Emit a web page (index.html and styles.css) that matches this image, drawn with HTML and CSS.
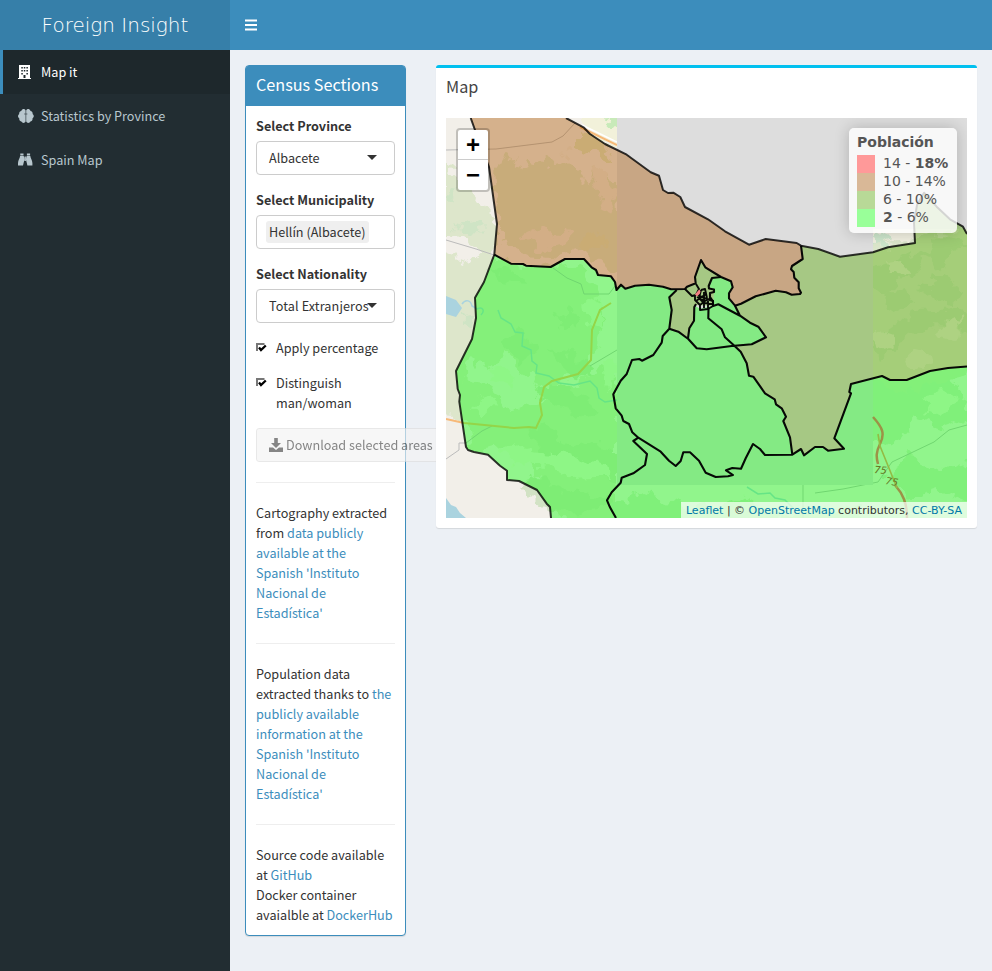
FILE: index.html
```html
<!DOCTYPE html>
<html lang="en">
<head>
<meta charset="utf-8">
<title>Foreign Insight</title>
<link rel="stylesheet" href="styles.css">
</head>
<body>
<header class="topbar">
  <div class="logo">Foreign Insight</div>
  <nav class="navbar"><svg class="bars" viewBox="0 0 12 12"><path d="M0 1.5h12M0 6h12M0 10.5h12" stroke="#fff" stroke-width="2"/></svg></nav>
</header>
<div class="layout">
  <aside class="sidebar">
    <a class="item active"><svg class="ico" viewBox="0 0 16 14"><path fill-rule="evenodd" d="M1 0h11v13h1v1H0v-1h1zM3.300 2v1.600h1.500V2zm2.500 0v1.600h1.500V2zm2.600 0v1.600h1.500V2zM3.300 5v1.600h1.500V5zm2.500 0v1.600h1.500V5zm2.600 0v1.600h1.500V5zM3.300 8v1.500h1.500V8zm5.100 0v1.500h1.500V8zM5.500 10v3h2v-3z"/></svg>Map it</a>
    <a class="item"><svg class="ico" viewBox="0 0 16 14"><path d="M7.600 1.600v11C6.800 14.300 4.400 14.300 3.700 12.700 1.900 12.600.9 11 1.400 9.600-.4 8.300-.4 5.900 1.200 4.900.9 3.300 2 2 3.300 1.900 4.200-.4 7-.5 7.600 1.600zM8.200 1.600v11c.8 1.700 3.200 1.700 3.900.1 1.800-.1 2.800-1.700 2.300-3.100 1.800-1.300 1.800-3.700.2-4.700.3-1.600-.8-2.900-2.100-3C11.600-.4 8.800-.5 8.200 1.600z"/><path d="M7.700 5H6.300M8.200 5h1.100" stroke="#222d32" stroke-width=".7"/></svg>Statistics by Province</a>
    <a class="item"><svg class="ico" viewBox="0 0 16 14"><path d="M2.300.5h3.200v2H2.300zM8.900.5h3.200v2H8.900zM2.100 3.100h3.600c.5 1.200.7 2.400.7 3.700L5 12.500H0V10C.2 7.200 1.800 5.500 2.100 3.100zM12.300 3.100H8.700C8.200 4.300 8 5.500 8 6.800l1.400 5.700h5V10c-.2-2.800-1.800-4.500-2.100-6.900zM6.500 3.500h1.400V8H6.500z"/></svg>Spain Map</a>
  </aside>
  <main class="content">
    <section class="panel">
      <h3 class="panel-head">Census Sections</h3>
      <div class="panel-body">
        <div class="group"><label>Select Province</label><div class="select">Albacete<i class="caret"></i></div></div>
        <div class="group"><label>Select Municipality</label><div class="select multi"><span class="tag">Hellín (Albacete)</span></div></div>
        <div class="group"><label>Select Nationality</label><div class="select total">Total Extranjeros<i class="caret"></i></div></div>
        <div class="check"><svg class="box" viewBox="0 0 11 10"><path d="M1 8V1H8.500" fill="none" stroke="#777" stroke-width="2"/><path d="M3 4.500L5 7 9.800 2.500" fill="none" stroke="#000" stroke-width="2.300"/></svg><span>Apply percentage</span></div>
        <div class="check"><svg class="box" viewBox="0 0 11 10"><path d="M1 8V1H8.500" fill="none" stroke="#777" stroke-width="2"/><path d="M3 4.500L5 7 9.800 2.500" fill="none" stroke="#000" stroke-width="2.300"/></svg><span>Distinguish man/woman</span></div>
        <button class="download" disabled><svg viewBox="0 0 14 14"><path d="M5.200 0h3.600v5H12L7 10 2 5h3.200zM0 9.500h4L7 12l3-2.500h4V14H0z"/></svg><span>Download selected areas</span></button>
        <hr>
        <p>Cartography extracted<br>from <a>data publicly<br>available at the<br>Spanish 'Instituto<br>Nacional de<br>Estadística'</a></p>
        <hr>
        <p>Population data<br>extracted thanks to <a>the<br>publicly available<br>information at the<br>Spanish 'Instituto<br>Nacional de<br>Estadística'</a></p>
        <hr>
        <p>Source code available<br>at <a>GitHub</a><br>Docker container<br>avaialble at <a>DockerHub</a></p>
      </div>
    </section>
    <section class="mapbox">
      <h3 class="map-title">Map</h3>
      <div class="map">
        <svg class="canvas" viewBox="446 118 521 400">
          <defs>
            <filter id="rough" x="-5%" y="-5%" width="110%" height="110%" color-interpolation-filters="sRGB"><feTurbulence type="fractalNoise" baseFrequency=".07" numOctaves="3" seed="4"/><feDisplacementMap in="SourceGraphic" scale="22" xChannelSelector="R" yChannelSelector="G"/></filter>
            <clipPath id="tiles"><path d="M446 118H617V518H446zM617 485H873V229H967V518H617z"/></clipPath>
          </defs>
          <path fill="#ddd" d="M446 118h521v400H446z"/>
          <g clip-path="url(#tiles)">
            <path fill="#f2efe9" d="M446 118h521v400H446z"/>
            <g filter="url(#rough)">
              <path fill="#dde6cb" d="M440 160L462 180 494 220 498 270 478 330 462 385 470 420 440 418V250L470 262 480 250 440 232z"/>
              <path fill="#cfe4c5" d="M456 226l18-5 15 3-8 8-22 1zM446 192l10-4-6 12zM462 318l15-2v16l-16-3z"/>
              <path fill="#dde6cb" d="M492 165l20-8 12 18 7-15 20 3 18-4 12 12 8 18 6-20 18 10 6 20 4 36-2 50-10-10-22-25-30 8-30-3-25-12-8-40z"/>
              <path fill="#eee9df" d="M522 235l20-10 15 10 12-4-8 16-20 4zM561 152l10-5 2 8zM596 165l12 10 8 30-8 10-15-30z"/>
              <path fill="#dfe6c2" d="M578 132l20 4 14 25-20-10-14-4zM580 235l20-5 5 16-22 6z"/>
              <path fill="#f2f1da" d="M580 112h37v36l-25-12z"/><path fill="#c8eab9" d="M603 114h20v20l-10-9z"/>
              <path fill="#dde6cb" d="M494 260l40 8 32-6 20 8 20 40-10 35-16 25-28 20-22-10-20-24-24 15-20-20 12-60z"/>
              <path fill="#dde6cb" d="M462 380l28 2 20 30 40-10 50-35 17 6v150l-55-2-30-58-30-16-28 4-10-44z"/>
              <path fill="#d2e2c4" d="M485 268l26 3 15 13-25-2zM555 315l16-5 8 14-20 4zM500 340l20-10 15 20-16 10zM549 345l25 10 20 17-20 8-18-14zM545 385l30 5 25 20-20 8-40-18zM530 430l18-8 10 20 20 5 20-5 19 10v30l-40-8-30-10z"/>
              <path fill="#d2e2c4" d="M517 482l20-6 30 15 40 5 10 10-50 6-30-10z"/>
              <path fill="#edf1e0" d="M488 370l15-5 12 15-6 9zM472 405l14-12 10 12-14 13zM499 450l20-8 10 8 25 2 12 10-25 5-28-2zM602 364l12-6 3 20-12 8zM586 305l16-8v28l-12 6zM540 460l30-8 20 12 14-2 4 16-34 2z"/>
              <path fill="#f0efe0" d="M865 220h60v25l-57 10z"/><path fill="#cce5cb" d="M872 236l15-3 6 8-20 6z"/>
              <path fill="#dbe6ca" d="M865 248l110-22v148l-110 25z"/>
              <path fill="#cbe2bf" d="M874 268l20-5 12-12 10 7 24-24 20 2 12 14-22 5-10 15-12-15-14 26-10-6-15 20-14-10zM885 295l20-6 9 14-24 8zM920 290l18-12 25 12-10 16-18-8zM873 340l40-30 50-2 8 20-38-2-26 12-25 20z"/>
              <path fill="#e9edd9" d="M875 330l18 6-4 13-14-10zM903 360l10-12 16 4 3 12-14 4zM935 335l26-20-8 25zM888 262l16-2 4 14-16 4z"/>
              <path fill="#d6e6cb" d="M865 382l38 8 50-12 20 40-30 10-30-12-20 30-28-6zM887 475l25-20 30 15 30-10v45l-35-16-30 10zM610 505l37-12 45 16 50-9 40 15 80-10v24H610z"/>
              <path fill="#edf1e0" d="M928 392l15-2 18 11-17 14-20-4z"/>
            </g>
            <path fill="#aad3df" d="M446 296l10 4 6 8-6 9-10-3zM446 498l5 7 5 2 4 6 6 5h-20z"/>
            <path fill="none" stroke="#aad3df" stroke-width="1.500" d="M462 304c4-6 9-3 10 2l5 3c6-3 8 2 4 6m17-5l3 8 10 6 4 8 8 1-1 13 9 4 1 11 5 4-1 8 13 3 10 7 15 2 16-4 7 7 2 10 6 4 12-2M747 487l11 7 12-1 5 5 10 2 9 9"/>
            <path fill="none" stroke="#bbb" d="M446 150l50-1 56-7 11-6 12-13M446 240l30 9 18 6M553 268l14 10 14 6 3 10h25l6-8M590 366l27-16M446 459l13-9v-7h7l16-12 10-5M967 425l-18 5-15 12-42 20-14 20-35 7-28 4M803 485v33"/>
            <path fill="none" stroke="#f7b978" stroke-width="2" d="M446 419l18 4 50 5 15-1 7 1 6-13-2-12 4-16 8-6 26-7 13-14 1-30 8-20 11-7M580 127l37 18"/>
            <path fill="none" stroke="#fff" stroke-width="1.500" d="M582 125l35 17"/>
          </g>
          <g fill-opacity=".4">
            <path fill="#a50" d="M470.700 118L475 130 489 167 497 224 494.300 254.700 511 263.700 523 264 526 265.700 550.700 267 565 259H584L592 267.700 596 270 598 275 611 276.300 615 282 616.500 290 621 284.700 625.300 288.700 635 285.700 649 284.700 663 286.700 671 289.300 685 289 687 286.700 695.700 283.300 695 277 701 260 705.300 267.300 721 277 731 281.300 732.700 287.300 729 293.300V298.300L735 305.700 741 303.700 755.700 296.300 775.700 290.700 786 292.300 791.700 294.700 800 294 801 292.700 798.700 288.300V282.300L794.300 277.700 793.700 272 791 269.300 792 266 802.700 259 801 245.700 796.700 243 765.700 239 749 244.700 725 231.300 708 219.300 685 207 680.300 197 673.300 192.700H668L663 190 659 175.700 650.700 172.300 626.700 154.700 605 144 590 134 584 127.700 566 118z"/>
            <path fill="#0f0" d="M494.300 254.700L511 263.700 523 264 526 265.700 550.700 267 565 259H584L592 267.700 596 270 598 275 611 276.300 615 282 616.500 290 621 284.700 625.300 288.700 635 285.700 649 284.700 663 286.700 676.700 290 669.300 297.300 671.700 310 669.300 328.700 662.700 336 661.700 342.700 653.300 355 642 360.700 639.300 359 632 360 626.700 374 620.700 380.700 613.300 394.300 615.700 408.300 621.700 415.700 623.300 421 629 424 632.300 432.300 638.300 437.700 633.300 441 647 454 645 465 633.300 473.300 621.700 477.700 620.700 482.700 611.700 492.300 607 500.300 610 507.300 616 518H551L550 507 546.700 503.700 537 490 519 481 507 480V470.700L500 465.700 488 454.700 468 450 466 447 459.300 401.700 460 395 457.700 389 456 371 472 339 476 318 475 297.700 484 282z"/>
            <path fill="#0f0" d="M669.300 329L678.300 331.700 688.300 339 696.700 348 706.700 349 733.300 344.700 740.700 351.700 746.700 363.300 749 375.700 753.300 376.700 765 393.300 774.700 399.300 776 404.300 781.700 408.300 786 416.700 783.300 421 790 437.300 792.300 454.300 765 455 760 449 753 444 745.700 458.300 741 468.700 732.300 468 726 470.300 733 475 728 476.300 715.700 477 705.700 472.700 699 460.700 690 452.300H683.300L680.700 461 675.700 466 669 460.700 660.700 451.700 638.300 437.700 632.300 432.300 629 424 623.300 421 621.700 415.700 615.700 408.300 613.300 394.300 620.700 380.700 626.700 374 632 360 639.300 359 642 360.700 653.300 355 661.700 342.700 662.700 336z"/>
            <path fill="#0f0" d="M638.300 437.700L633.300 441 647 454 645 465 633.300 473.300 621.700 477.700 620.700 482.700 611.700 492.300 607 500.300 610 507.300 616 518H967V366.500L948 368 930 371 906.700 380H890L882 376 851 384 849.300 392 851 393.300 834.300 438.300 844 448.700 828 450.700 823 447H815L804 455.300 801 449 792.300 455H765L760 449 753 444 745.700 458.300 741 468.700 732.300 468 726 470.300 733 475 728 476.300 715.700 477 705.700 472.700 699 460.700 690 452.300H683.300L680.700 461 675.700 466 669 460.700 660.700 451.700z"/>
            <path fill="#5a0" d="M801 245.700L818.300 249 840 256.700 873 252.300 888 247.300 915 243 914 223 917 205 924 192.700 936.700 206.700 950 219.300 963 226.700 967 234V366.500L948 368 930 371 906.700 380H890L882 376 851 384 849.300 392 851 393.300 834.300 438.300 844 448.700 828 450.700 823 447H815L804 455.300 801 449 792.300 454.300 790 437.300 783.300 421 786 416.700 781.700 408.300 776 404.300 774.700 399.300 765 393.300 753.300 376.700 749 375.700 746.700 363.300 740.700 351.700 733.300 344.700 751.700 344.300 766 337.300 758.300 326.700 750 322.700 740 315.700 735 305.700 741 303.700 755.700 296.300 775.700 290.700 786 292.300 791.700 294.700 800 294 801 292.700 798.700 288.300V282.300L794.300 277.700 793.700 272 791 269.300 792 266 802.700 259z"/>
            <path fill="#5a0" d="M676.700 290H685L687 286.700 695.700 283.300 695 277 701 260 705.300 267.300 721 277 712 278 708.700 286 714.300 290 713 306 694.300 305 694 320.700 689.300 328.300 688 338.300 678 331 669.300 328.700 671.700 310 669.300 297.300z"/>
            <path fill="#0f0" d="M721 277L731 281.300 732.700 287.300 729 293.300V298.300L740 315.700 718.300 304.300 713 306 714.300 290 708.700 286 712 278z"/>
            <path fill="#0f0" d="M694.300 305L700 309 718.300 304.300 740 315.700 750 322.700 758.300 326.700 766 337.300 751.700 344.300 733.300 345 706.700 349.300 696.700 348.300 688 338.300 689.300 328.300 694 320.700z"/>
          </g>
          <g fill="none" stroke-linejoin="round">
            <path stroke="#9c9247" stroke-width="2.500" d="M873 417c10 11 12 17 7 27-4 8-4 13-2 20M895 485c8 9 12 18 12 33"/>
            <path stroke="#93bb44" stroke-width="1.600" d="M878 434l2 12 17 42"/>
          </g>
          <g fill="none" stroke="#000" stroke-width="2" stroke-linejoin="round" stroke-opacity=".8">
            <path d="M470.700 118L475 130 489 167 497 224 494.300 254.700 484 282 475 297.700 476 318 472 339 456 371 457.700 389 460 395 459.300 401.700 466 447 468 450 474 452 488 454.700 500 465.700 507 470.700V480L519 481 537 490 546.700 503.700 550 507 551 518"/>
            <path d="M566 118L584 127.700 590 134 605 144 626.700 154.700 650.700 172.300 659 175.700 663 190 668 193 673.300 192.700 680.300 197 685 207 708 219.300 725 231.300 749 244.700 765.700 239 796.700 243 801 245.700 818.300 249 840 256.700 873 252.300 888 247.300 915 243 914 223 917 205 924 192.700 936.700 206.700 950 219.300 963 226.700 967 234"/>
          </g>
          <g fill="none" stroke="#000" stroke-width="2.100" stroke-linejoin="round" stroke-opacity=".96">
            <path d="M494.300 254.700L511 263.700 523 264 526 265.700 550.700 267 565 259H584L592 267.700 596 270 598 275 611 276.300 615 282 616.500 290 621 284.700 625.300 288.700 635 285.700 649 284.700 663 286.700 671 289.300 685 289 687 286.700 695.700 283.300 695 277 701 260 705.300 267.300 721 277 731 281.300 732.700 287.300 729 293.300V298.300L735 305.700 741 303.700 755.700 296.300 775.700 290.700 786 292.300 791.700 294.700 800 294 801 292.700 798.700 288.300V282.300L794.300 277.700 793.700 272 791 269.300 792 266 802.700 259 801 245.700"/>
            <path d="M676.700 290L669.300 297.300 671.700 310 669.300 328.700 662.700 336 661.700 342.700 653.300 355 642 360.700 639.300 359 632 360 626.700 374 620.700 380.700 613.300 394.300 615.700 408.300 621.700 415.700 623.300 421 629 424 632.300 432.300 638.300 437.700 660.700 451.700 669 460.700 675.700 466 680.700 461 683.300 452.300H690L699 460.700 705.700 472.700 715.700 477 728 476.300 733 475 726 470.300 732.300 468 741 468.700 745.700 458.300 753 444 760 449 765 455 792.300 454.700 801 449 804 455.300 815 447H823L828 450.700 844 448.700 834.300 438.300 851 393.300 849.300 392 851 384 882 376 890 380H906.700L930 371 948 368 967 366.500"/>
            <path d="M638.300 437.700L633.300 441 647 454 645 465 633.300 473.300 621.700 477.700 620.700 482.700 611.700 492.300 607 500.300 610 507.300 616 518M669.300 328.700L678.300 331.700 688.300 339 696.700 348.300 706.700 349.300 731.700 346 751.700 344.300 766 337.300 758.300 326.700 750 322.700 740 315.700 718.300 304.300 713 306M735 305.700L740 315.700M688 338.300L689.300 328.300 694 320.700 694.300 307 696 304M708.500 309L708.300 318.300 721.700 329.300 725 337.300 733.300 344.700 740.700 351.700 746.700 363.300 749 375.700 753.300 376.700 765 393.300 774.700 399.300 776 404.300 781.700 408.300 786 416.700 783.300 421 790 437.300 792.300 454.300M721 277L712 278 708.700 286 709 288.500 714 289.500V292L710 293V298L713 301 713 306"/>
            <path stroke-width="1.900" d="M685 289l7 7 4-1 3-6-3-5M695 295v5l5 5v5l8-1 5-3v-5l-9-3-8-4M701 290l4-1 2 9M701 290l-2 8 5 5 9 1M696 301l7-5 4-2M704 292v16M697 297l8 4 7-3M700 305l5-4M708 301v8"/>
          </g>
          <path fill="#f47f84" d="M695 294.500l4-5 1.500 1.500-.5 2.500-3 3z"/>
          <g class="contour"><text x="874" y="473" transform="rotate(5 874 473)">75</text><text x="885" y="484" transform="rotate(10 885 484)">75</text></g>
        </svg>
        <div class="zoom"><span>+</span><span>−</span></div>
        <div class="legend"><b class="lt">Población</b>
          <div class="row"><i class="sw red"></i><span>14 - <b>18%</b></span></div>
          <div class="row"><i class="sw brown"></i><span>10 - 14%</span></div>
          <div class="row"><i class="sw olive"></i><span>6 - 10%</span></div>
          <div class="row"><i class="sw green"></i><span><b>2</b> - 6%</span></div>
        </div>
        <div class="attrib"><a>Leaflet</a> | © <a>OpenStreetMap</a> contributors, <a>CC-BY-SA</a></div>
      </div>
    </section>
  </main>
</div>
</body>
</html>
```
FILE: styles.css
```css
* { box-sizing: border-box; }
body { margin: 0; font: 12.650px/20px "Source Sans Pro", "Noto Sans CJK JP", sans-serif; color: #333; background: #ecf0f5; }
a { color: #3c8dbc; text-decoration: none; }
.topbar { display: flex; height: 50px; background: #3c8dbc; }
.logo { width: 230px; background: #367fa9; color: #fff; text-align: center; font: 200 20px/50px "DejaVu Sans", sans-serif; }
.navbar { padding: 19px 15px; }
.bars { display: block; width: 12px; height: 12px; }
.layout { display: flex; height: 921px; }
.sidebar { width: 230px; background: #222d32; }
.item { display: flex; align-items: center; height: 44px; padding-left: 15px; border-left: 3px solid transparent; color: #b8c7ce; }
.item.active { background: #1e282c; border-left-color: #3c8dbc; color: #fff; }
.ico { width: 16px; height: 14px; margin-right: 7px; fill: currentColor; }
.content { display: flex; align-items: flex-start; gap: 30px; padding: 15px; flex: 1; }
.panel { width: 161px; height: 871px; border: 1px solid #3c8dbc; border-radius: 4px; background: #fff; box-shadow: 0 1px 1px rgba(0,0,0,.1); }
.panel-head { margin: 0; height: 40px; padding: 0 10px; background: #3c8dbc; color: #fff; font-size: 16.200px; font-weight: 400; line-height: 37px; white-space: nowrap; border-radius: 2px 2px 0 0; }
.panel-body { padding: 10px; white-space: nowrap; }
.group { margin-bottom: 15px; }
.group label { display: block; margin-bottom: 5px; font-weight: 700; }
.select { position: relative; display: flex; align-items: center; height: 34px; padding-left: 12px; border: 1px solid #ccc; border-radius: 4px; }
.multi { padding-left: 9px; }
.total { letter-spacing: .1px; }
.tag { padding: 1px 3px; background: #efefef; border-radius: 3px; }
.caret { position: absolute; right: 17px; top: 13px; border: 5px solid transparent; border-top-color: #333; border-bottom: 0; }
.check { display: flex; margin-bottom: 15px; white-space: normal; }
.box { width: 11px; height: 10px; margin: 5px 9px 0 0; flex: none; }
.download { display: flex; align-items: center; width: 190px; height: 34px; padding: 0 12px; border: 1px solid #ddd; border-radius: 3px; background: #f4f4f4; color: #444; font: inherit; white-space: nowrap; opacity: .65; }
.download svg { flex: none; width: 14px; height: 14px; margin-right: 3px; fill: #444; }
hr { margin: 20px 0; border: 0; border-top: 1px solid #eee; }
p { margin: 0; }
.mapbox { position: relative; width: 541px; height: 463px; padding: 0 10px; background: #fff; border-top: 3px solid #00c0ef; border-radius: 3px; box-shadow: 0 1px 1px rgba(0,0,0,.1); }
.map-title { margin: 0; height: 50px; font-size: 16.200px; font-weight: 400; line-height: 36px; color: #444; }
.map { position: relative; width: 521px; height: 400px; overflow: hidden; font-family: "DejaVu Sans", sans-serif; }
.canvas { display: block; width: 521px; height: 400px; }
.zoom { position: absolute; left: 10px; top: 10px; width: 34px; border: 2px solid rgba(0,0,0,.2); border-radius: 4px; background: #fff; background-clip: padding-box; }
.zoom span { display: block; height: 30px; text-align: center; font: bold 24px/30px "Liberation Sans", sans-serif; color: #000; }
.zoom span:first-child { height: 29px; }
.zoom span + span { height: 31px; border-top: 1px solid #ccc; line-height: 29px; }
.legend { position: absolute; right: 10px; top: 10px; width: 108px; height: 105px; padding: 5px 8px; border-radius: 5px; background: rgba(255,255,255,.8); box-shadow: 0 0 15px rgba(0,0,0,.2); font-size: 14px; line-height: 18px; color: #555; white-space: nowrap; }
.lt { display: block; height: 22px; }
.row { display: flex; gap: 8px; height: 18px; }
.row span { margin-top: -1px; }
.sw { width: 18px; height: 18px; }
.red { background: #f99; }
.brown { background: #d9b897; }
.olive { background: #b8d997; }
.green { background: #9f9; }
.attrib { position: absolute; right: 0; bottom: 0; height: 16px; padding: 0 5px; background: rgba(255,255,255,.7); font-size: 11px; line-height: 17px; white-space: nowrap; }
.attrib a { color: #0078a8; }
.contour { font: italic 10px "DejaVu Sans", sans-serif; fill: #66751f; }
```
